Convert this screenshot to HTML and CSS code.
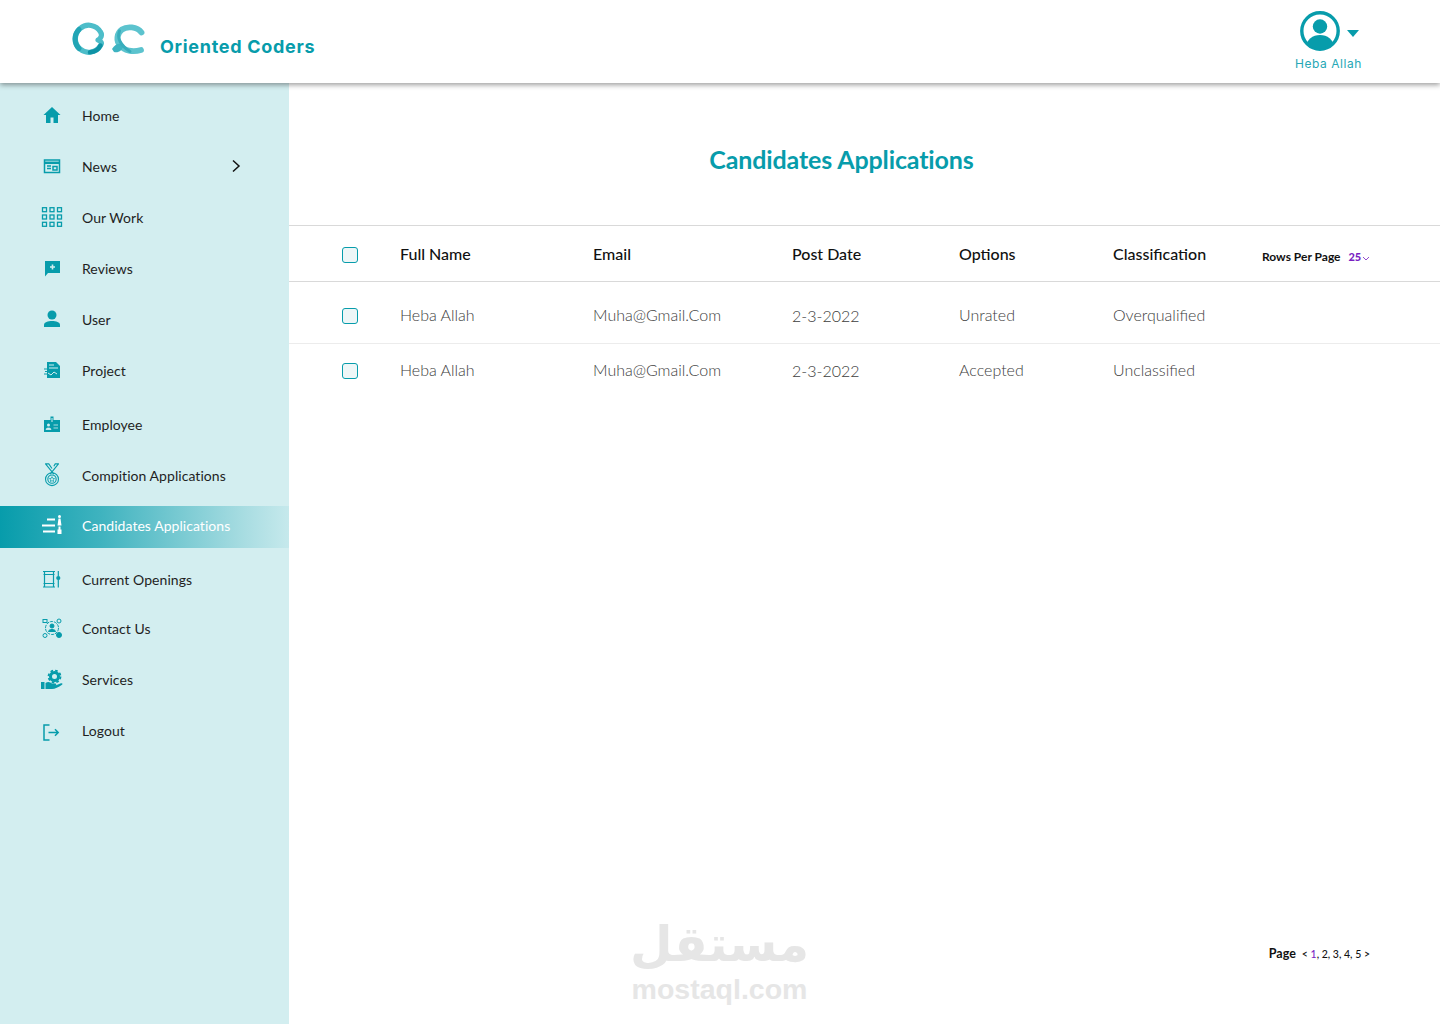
FILE: index.html
```html
<!DOCTYPE html>
<html lang="en">
<head>
<meta charset="utf-8">
<title>Candidates Applications</title>
<link rel="stylesheet" href="styles.css">
</head>
<body>
<header class="topbar">
  <div class="brand">
    <svg class="brand-logo" viewBox="71 22 76 36" width="76" height="36" fill="none">
      <path d="M98 40C101 38.500 102.500 35 100.500 32A13.500 13.500 0 1 0 100.500 45.500C102.500 43 101 41 98 40Z" stroke="#4dbdc9" stroke-width="5.200" stroke-linejoin="round"/>
      <path d="M79 29.500A13.500 13.500 0 0 0 79 48.500" stroke="#22a5b5" stroke-width="5.200" stroke-linecap="round"/>
      <path d="M90 52.300C95 52 98.500 49.500 100.500 45.500" stroke="#0f93a6" stroke-width="4.500" stroke-linecap="round"/>
      <path d="M141.500 32.500C137 26.500 127 26 122 29.500C116.500 33.500 116 41 120 45C124 51 133 52.500 141 50" stroke="#5cc3ce" stroke-width="5.800" stroke-linecap="round"/>
      <path d="M112 49C115 44 120 42.500 123.500 45C123 50 118 53.500 114 52Z" fill="#3eb3c1"/>
      <path d="M119.500 31C116.500 38 121 46 130 51.500" stroke="#38adbc" stroke-width="3" stroke-linecap="round"/>
    </svg>
    <span class="brand-name">Oriented Coders</span>
  </div>
  <div class="account">
    <div class="account-top">
      <svg class="account-avatar" viewBox="0 0 40 40" width="40" height="40">
        <defs><clipPath id="avatar-clip"><circle cx="20" cy="20" r="17.500"/></clipPath></defs>
        <circle cx="20" cy="20" r="18.200" fill="none" stroke="#079cab" stroke-width="3.400"/>
        <circle cx="20" cy="15.500" r="7.200" fill="#079cab"/>
        <ellipse cx="20" cy="35" rx="13.500" ry="11" fill="#079cab" clip-path="url(#avatar-clip)"/>
      </svg>
      <svg class="account-caret" viewBox="0 0 12 7" width="12" height="7"><path d="M0 0H12L6 7Z" fill="#079cab"/></svg>
    </div>
    <span class="account-name">Heba Allah</span>
  </div>
</header>

<div class="shell">
  <nav class="sidebar">
    <a class="nav-item">
      <svg class="nav-icon" viewBox="0 0 22 22"><path d="M11 3 2.500 11H5V19H9.500V13.500H12.500V19H17V11H19.500Z" fill="#079cab"/></svg>
      <span>Home</span>
    </a>
    <a class="nav-item">
      <svg class="nav-icon" viewBox="0 0 22 22" fill="none" stroke="#079cab"><rect x="3.500" y="5" width="15" height="12.500" stroke-width="1.500"/><path d="M3 7.800H19" stroke-width="2.500"/><path d="M6 11H10M6 13.500H10M12 11.500H16V15H12Z" stroke-width="1.500"/></svg>
      <span>News</span>
      <svg class="nav-chevron" viewBox="0 0 10 14" width="10" height="14" fill="none"><path d="M2 1.500 8 7 2 12.500" stroke="#111" stroke-width="1.500"/></svg>
    </a>
    <a class="nav-item">
      <svg class="nav-icon" viewBox="0 0 22 22" fill="none" stroke="#079cab" stroke-width="1.300"><rect x="1.500" y="1.700" width="4" height="4"/><rect x="9" y="1.700" width="4" height="4"/><rect x="16.500" y="1.700" width="4" height="4"/><rect x="1.500" y="9" width="4" height="4"/><rect x="9" y="9" width="4" height="4"/><rect x="16.500" y="9" width="4" height="4"/><rect x="1.500" y="16.300" width="4" height="4"/><rect x="9" y="16.300" width="4" height="4"/><rect x="16.500" y="16.300" width="4" height="4"/></svg>
      <span>Our Work</span>
    </a>
    <a class="nav-item">
      <svg class="nav-icon" viewBox="0 0 22 22"><path d="M4 4H19V16H7L4 19.500Z" fill="#079cab"/><path d="M11.500 7.500V12.500M9 10H14" stroke="#d3eef0" stroke-width="1.600"/></svg>
      <span>Reviews</span>
    </a>
    <a class="nav-item">
      <svg class="nav-icon" viewBox="0 0 22 22"><circle cx="11" cy="7" r="4.500" fill="#079cab"/><path d="M3 19V17C3 14 7 13 11 13S19 14 19 17V19Z" fill="#079cab"/></svg>
      <span>User</span>
    </a>
    <a class="nav-item">
      <svg class="nav-icon" viewBox="0 0 22 22"><path d="M6 3H15L19 7V19H6Z" fill="#079cab"/><path d="M8 6H13M8 9H17M7 14 10 16 13 13 16 15" stroke="#d3eef0" stroke-width="1" fill="none"/><path d="M3 10H7M4 12.500H7M3 15H7" stroke="#079cab" stroke-width="1"/></svg>
      <span>Project</span>
    </a>
    <a class="nav-item nav-item-after-gap">
      <svg class="nav-icon" viewBox="0 0 22 22"><path d="M3 7H9.500V3.500H12.500V7H19V19H3Z" fill="#079cab"/><path d="M11 5V9" stroke="#d3eef0" stroke-width="1"/><circle cx="7.500" cy="12" r="1.500" fill="#d3eef0"/><path d="M5 16.500C5 14.500 10 14.500 10 16.500ZM12.500 12H17M12.500 15H17" fill="#d3eef0" stroke="#d3eef0" stroke-width=".8"/></svg>
      <span>Employee</span>
    </a>
    <a class="nav-item">
      <svg class="nav-icon nav-icon-tall" viewBox="0 0 22 26" fill="none" stroke="#079cab" stroke-width="1.200"><path d="M4 1 13 12M18 1 9 12M3.500 1H7.500L11 6M18.500 1H14.500L13 3.500"/><circle cx="11" cy="17.500" r="7"/><circle cx="11" cy="17.500" r="4.500"/><path d="M11 14.800 11.900 16.700 13.800 16.900 12.400 18.200 12.800 20.100 11 19.100 9.200 20.100 9.600 18.200 8.200 16.900 10.100 16.700Z" stroke-width=".8"/></svg>
      <span>Compition Applications</span>
    </a>
    <a class="nav-item nav-item-active">
      <svg class="nav-icon" viewBox="0 0 22 22" fill="#fff"><path d="M6 3.500H14V5.500H6ZM1 9.500H14V11.500H1ZM2 15.500H14V17.500H2Z"/><circle cx="18.500" cy="1.500" r="1.500"/><path d="M17.500 3.500H19.500L20.500 10.500H16.500ZM17.500 11.500H19.500V14.500H20.500V19H16.500V14.500H17.500Z"/></svg>
      <span>Candidates Applications</span>
    </a>
    <a class="nav-item nav-item-after-active">
      <svg class="nav-icon" viewBox="0 0 22 22" fill="none" stroke="#079cab" stroke-width="1.200"><path d="M2 3.500H14M2 19H14M3.500 3.500V19M12.500 3.500V19M2.500 6.500H13.500M2.500 15.500H13.500"/><path d="M17.300 3V8M17.300 12V19.500"/><circle cx="17.300" cy="10" r="1.500" fill="#079cab"/></svg>
      <span>Current Openings</span>
    </a>
    <a class="nav-item nav-item-tight">
      <svg class="nav-icon" viewBox="0 0 22 22" fill="none" stroke="#079cab" stroke-width="1"><circle cx="11" cy="11" r="6.500" stroke-dasharray="3 1"/><circle cx="11" cy="9" r="2" fill="#079cab"/><path d="M7.500 14.500C7.500 11.800 14.500 11.800 14.500 14.500Z" fill="#079cab"/><rect x="2" y="2.500" width="4" height="3"/><circle cx="18" cy="4" r="2"/><circle cx="4" cy="18.500" r="2"/><circle cx="18" cy="18" r="2.500" fill="#079cab"/></svg>
      <span>Contact Us</span>
    </a>
    <a class="nav-item">
      <svg class="nav-icon" viewBox="0 0 22 22"><circle cx="13.500" cy="8.500" r="4" fill="none" stroke="#079cab" stroke-width="3"/><circle cx="13.500" cy="8.500" r="6" fill="none" stroke="#079cab" stroke-width="1.800" stroke-dasharray="2.600 2.100"/><path d="M0 14H3.500V21H0ZM4.500 15C7 13.500 9 14 11 15.500H14.500C15.500 15.500 15.500 17.200 14.500 17.200H10.500L15 17.300 20 15.300C21.500 15 22 16 21 16.800 17.500 19.500 14 21 11 21H4.500Z" fill="#079cab"/></svg>
      <span>Services</span>
    </a>
    <a class="nav-item">
      <svg class="nav-icon" viewBox="0 0 22 22" fill="none" stroke="#079cab" stroke-width="1.500"><path d="M8.500 6H3V21H8.500"/><path d="M7.500 13.500H17M14 10.300 17.200 13.500 14 16.700"/></svg>
      <span>Logout</span>
    </a>
  </nav>

  <main class="content">
    <h1 class="page-title">Candidates Applications</h1>
    <section class="table">
      <div class="table-row table-head">
        <span class="check"></span>
        <span>Full Name</span>
        <span>Email</span>
        <span>Post Date</span>
        <span>Options</span>
        <span>Classification</span>
        <span class="rows-per-page">Rows Per Page <b class="rows-value">25</b><svg class="rows-chevron" viewBox="0 0 8 5" width="8" height="5" fill="none"><path d="M1 1 4 4 7 1" stroke="#7a1fc2" stroke-width=".8"/></svg></span>
      </div>
      <div class="table-row table-body table-body-first">
        <span class="check"></span>
        <span>Heba Allah</span>
        <span>Muha@Gmail.Com</span>
        <span class="cell-date">2-3-2022</span>
        <span>Unrated</span>
        <span>Overqualified</span>
      </div>
      <div class="table-row table-body table-body-last">
        <span class="check"></span>
        <span>Heba Allah</span>
        <span>Muha@Gmail.Com</span>
        <span class="cell-date">2-3-2022</span>
        <span>Accepted</span>
        <span>Unclassified</span>
      </div>
    </section>
    <footer class="pager">
      <b class="pager-label">Page</b>
      <span class="pager-links">&lt; <span class="pager-current">1</span>, 2, 3, 4, 5 &gt;</span>
    </footer>
  </main>
</div>

<div class="watermark">
  <span class="watermark-ar" lang="ar" dir="rtl">مستقل</span>
  <span class="watermark-en">mostaql.com</span>
</div>
</body>
</html>
```
FILE: styles.css
```css
* { box-sizing: border-box; }

html, body { height: 100%; }

body {
  margin: 0;
  height: 1024px;
  overflow: hidden;
  display: flex;
  flex-direction: column;
  background: #fff;
  color: #1c1c1c;
  font-family: Lato, "Liberation Sans", sans-serif;
  position: relative;
}

.topbar {
  flex: 0 0 83px;
  display: flex;
  align-items: flex-start;
  justify-content: space-between;
  padding: 0 77px 0 71px;
  background: #fff;
  box-shadow: 0 2px 5px rgba(0, 0, 0, .38);
  position: relative;
  z-index: 2;
}

.brand {
  display: flex;
  align-items: center;
  gap: 13px;
  padding-top: 22px;
}

.brand-logo { display: block; }

.brand-name {
  font-family: Inter, "Liberation Sans", sans-serif;
  font-weight: 700;
  font-size: 18px;
  letter-spacing: .7px;
  color: #079cab;
  padding-top: 13px;
}

.account {
  display: flex;
  flex-direction: column;
  align-items: center;
  padding-top: 11px;
  width: 67px;
}

.account-top {
  display: flex;
  align-items: center;
  gap: 7px;
}

.account-avatar { display: block; }

.account-caret { display: block; margin-top: 4px; }

.account-name {
  font-family: Inter, "Liberation Sans", sans-serif;
  font-size: 12px;
  letter-spacing: .55px;
  color: #26a8b6;
  white-space: nowrap;
  margin-top: 5px;
  margin-right: 2px;
}

.shell {
  flex: 1;
  display: flex;
  min-height: 0;
}

.sidebar {
  flex: 0 0 289px;
  display: flex;
  flex-direction: column;
  gap: 9px;
  padding-top: 11px;
  background: #d3eef0;
}

.nav-item {
  flex: 0 0 42px;
  display: flex;
  align-items: center;
  gap: 19px;
  padding: 0 48px 0 41px;
  font-size: 14px;
  letter-spacing: .05px;
  color: #1f1f1f;
}

.nav-item-after-gap { margin-top: 3px; }
.nav-item-after-active { margin-top: 1px; }
.nav-item-tight { margin-top: -2px; }

.nav-item-active {
  margin-top: 1px;
  padding-bottom: 3px;
  color: #fff;
  background: linear-gradient(90deg, #079cab 0%, #3fb3bf 35%, #a9dde2 85%, #c6e9ec 100%);
}

.nav-icon {
  flex: 0 0 22px;
  width: 22px;
  height: 22px;
  display: block;
}

.nav-icon-tall { height: 24px; }

.nav-chevron { margin-left: auto; }

.content {
  flex: 1;
  display: flex;
  flex-direction: column;
  min-width: 0;
}

.page-title {
  margin: 0;
  height: 143px;
  display: flex;
  align-items: center;
  justify-content: center;
  padding: 9px 46px 0 0;
  font-size: 25px;
  font-weight: 700;
  letter-spacing: -.13px;
  color: #079cab;
  border-bottom: 1px solid #d9d9d9;
}

.table-row {
  display: grid;
  grid-template-columns: 58px 193px 199px 167px 154px 149px 1fr;
  align-items: center;
  padding-left: 53px;
  font-size: 16px;
}

.table-head {
  height: 56px;
  font-weight: 500;
  color: #111;
  border-bottom: 1px solid #d9d9d9;
}

.table-body {
  height: 62px;
  font-weight: 300;
  color: #3d3d3d;
  border-bottom: 1px solid #ececec;
}

.table-body-first { padding-top: 4px; }

.table-body-last {
  height: 50px;
  border-bottom: 0;
}

.cell-date { padding-top: 2px; }

.check {
  width: 16px;
  height: 16px;
  margin-top: 2px;
  border: 1.500px solid #079cab;
  border-radius: 3px;
  background: #eef6f7;
}

.table-body-last .check { margin-top: 4px; }

.rows-per-page {
  font-size: 12px;
  font-weight: 700;
  color: #111;
  white-space: nowrap;
  padding-top: 5px;
}

.rows-value {
  font-size: 11px;
  color: #7a1fc2;
  margin-left: 5px;
}

.rows-chevron { margin-left: 1px; }

.pager {
  margin-top: auto;
  display: flex;
  align-items: center;
  justify-content: flex-end;
  gap: 6px;
  padding: 0 70px 63px 0;
  color: #111;
}

.pager-label { font-size: 12.500px; font-weight: 700; }

.pager-links { font-size: 10.500px; font-weight: 500; }

.pager-current { color: #7a1fc2; }

.watermark {
  position: absolute;
  left: 632px;
  top: 920px;
  width: 175px;
  display: flex;
  flex-direction: column;
  align-items: center;
  color: #e6e6e6;
  line-height: 1;
}

.watermark-ar {
  font-family: "DejaVu Sans", sans-serif;
  font-weight: 700;
  font-size: 49px;
  height: 55px;
}

.watermark-en {
  font-family: "Liberation Sans", sans-serif;
  font-weight: 700;
  font-size: 28.500px;
}
```
